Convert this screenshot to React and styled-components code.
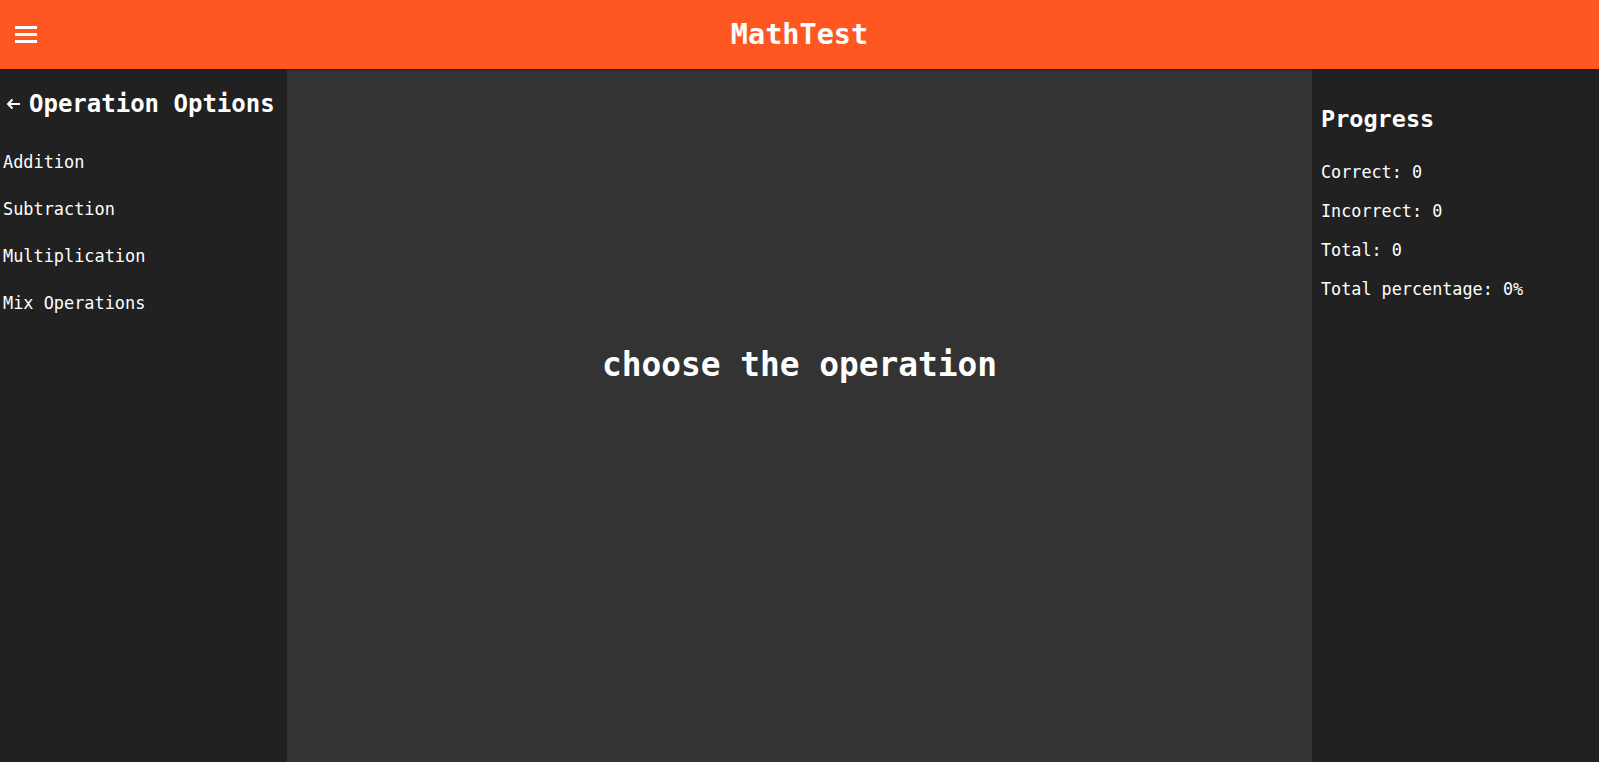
import React from "react"
import styled, { createGlobalStyle } from "styled-components"

const GlobalStyle = createGlobalStyle`
	html, body {
		margin: 0;
		padding: 0;
		background: #333333;
		font-family: "DejaVu Sans Mono", "Liberation Mono", monospace;
		color: #ffffff;
	}
`

const operations = ["Addition", "Subtraction", "Multiplication", "Mix Operations"]
const stats = [
	["Correct", "0"],
	["Incorrect", "0"],
	["Total", "0"],
	["Total percentage", "0%"],
]

const App = () => {
	return (
		<Page>
			<GlobalStyle />
			<Header>
				<MenuButton aria-label="menu">
					<svg width="22" height="18" viewBox="0 0 22 18">
						<rect x="0" y="0" width="22" height="3" fill="#fff" />
						<rect x="0" y="7" width="22" height="3" fill="#fff" />
						<rect x="0" y="14" width="22" height="3" fill="#fff" />
					</svg>
				</MenuButton>
				<Brand>MathTest</Brand>
			</Header>
			<Main>
				<LeftPanel>
					<PanelTitle>
						<BackArrow width="15" height="12" viewBox="0 0 15 12">
							<path
								d="M14 6H2M6.5 1.5L2 6l4.5 4.5"
								stroke="#fff"
								strokeWidth="2"
								fill="none"
							/>
						</BackArrow>
						Operation Options
					</PanelTitle>
					<OptionList>
						{operations.map((op) => (
							<Option key={op}>{op}</Option>
						))}
					</OptionList>
				</LeftPanel>
				<Center>
					<Prompt>choose the operation</Prompt>
				</Center>
				<RightPanel>
					<ProgressTitle>Progress</ProgressTitle>
					<StatList>
						{stats.map(([label, value]) => (
							<Stat key={label}>
								{label}: {value}
							</Stat>
						))}
					</StatList>
				</RightPanel>
			</Main>
		</Page>
	)
}

export default App

const Page = styled.div`
	width: 100%;
	min-height: 100vh;
	display: flex;
	flex-direction: column;
`
const Header = styled.header`
	height: 69px;
	background-color: #ff5722;
	display: flex;
	align-items: center;
	justify-content: center;
	position: relative;
	box-shadow: 0 1px 2px rgba(0, 0, 0, 0.35);
	z-index: 1;
`
const MenuButton = styled.div`
	position: absolute;
	left: 15px;
	top: 26px;
	display: flex;
	cursor: pointer;
`
const Brand = styled.h1`
	margin: 0;
	font-size: 28.5px;
	font-weight: 700;
	color: #fff;
	line-height: 1;
	transform: translateY(1px);
`
const Main = styled.div`
	flex: 1;
	display: grid;
	grid-template-columns: 287px 1fr 287px;
	height: 693px;
`
const LeftPanel = styled.aside`
	background-color: #212121;
	padding-left: 3px;
`
const PanelTitle = styled.h2`
	margin: 21px 0 0 0;
	height: 28px;
	display: flex;
	align-items: center;
	font-size: 24px;
	font-weight: 700;
	line-height: 28px;
	white-space: nowrap;
`
const BackArrow = styled.svg`
	margin-left: 3px;
	margin-right: 8px;
	flex-shrink: 0;
`
const OptionList = styled.ul`
	list-style: none;
	margin: 21px 0 0 0;
	padding: 0;
`
const Option = styled.li`
	height: 47px;
	line-height: 47px;
	font-size: 16.9px;
	cursor: pointer;
`
const Center = styled.main`
	background-color: #333333;
	display: flex;
	justify-content: center;
	padding-top: 276px;
`
const Prompt = styled.h2`
	margin: 0;
	font-size: 32.8px;
	font-weight: 700;
	line-height: 40px;
	height: 40px;
`
const RightPanel = styled.aside`
	background-color: #212121;
	padding-left: 9px;
`
const ProgressTitle = styled.h2`
	margin: 36px 0 0 0;
	font-size: 23.5px;
	font-weight: 700;
	line-height: 28px;
`
const StatList = styled.div`
	margin-top: 20px;
`
const Stat = styled.p`
	margin: 0;
	height: 39px;
	line-height: 39px;
	font-size: 16.8px;
`
